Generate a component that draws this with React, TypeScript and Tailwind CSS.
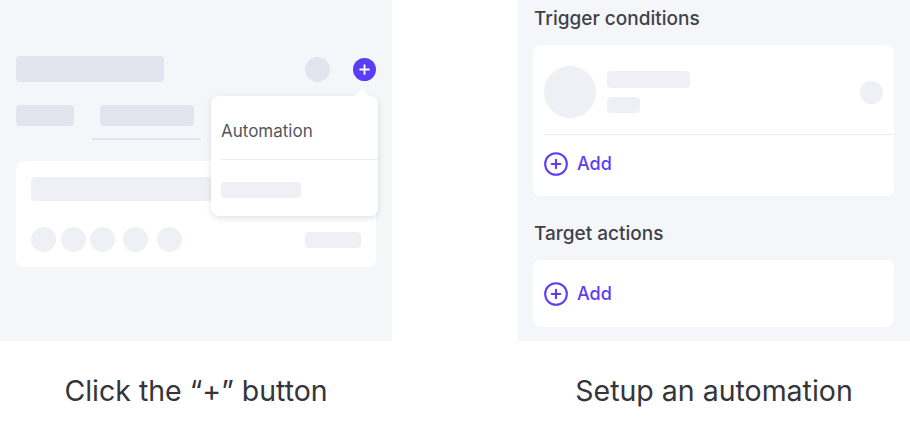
import React from 'react';
import { CirclePlus, Plus } from 'lucide-react';

const font = { fontFamily: 'Inter, "Noto Sans", sans-serif' };

function LeftPanel() {
  return (
    <div className="relative h-[341px] bg-[#f5f6fa] px-4 pt-[55px]">
      {/* header row */}
      <div className="flex h-[28px] items-center">
        <div className="h-[26px] w-[148px] rounded-[4px] bg-[#e3e5ee]" />
        <div className="ml-auto h-[25px] w-[25px] rounded-full bg-[#e3e5ee]" />
        <div className="ml-[23px] flex h-[23px] w-[23px] items-center justify-center rounded-full bg-[#5b3df5]">
          <Plus className="h-[15px] w-[15px] text-white" strokeWidth={3} />
        </div>
      </div>

      {/* tabs */}
      <div className="mt-[22px] flex items-start">
        <div className="h-[21px] w-[58px] rounded-[4px] bg-[#e3e5ee]" />
        <div className="ml-[18px] flex w-[109px] flex-col items-center">
          <div className="h-[21px] w-[94px] rounded-[4px] bg-[#e3e5ee]" />
          <div className="mt-3 h-[2px] w-full bg-[#e3e5ee]" />
        </div>
      </div>

      {/* card */}
      <div className="mt-[21px] h-[106px] w-[360px] rounded-lg bg-white px-[15px] pt-4">
        <div className="h-[24px] w-[260px] rounded-[4px] bg-[#eff0f5]" />
        <div className="mt-[26px] flex items-center">
          <div className="h-[25px] w-[25px] rounded-full bg-[#eff0f5]" />
          <div className="ml-[5px] h-[25px] w-[25px] rounded-full bg-[#eff0f5]" />
          <div className="ml-[4px] h-[25px] w-[25px] rounded-full bg-[#eff0f5]" />
          <div className="ml-[8px] h-[25px] w-[25px] rounded-full bg-[#eff0f5]" />
          <div className="ml-[9px] h-[25px] w-[25px] rounded-full bg-[#eff0f5]" />
          <div className="ml-auto h-[16px] w-[56px] rounded-[4px] bg-[#eff0f5]" />
        </div>
      </div>

      {/* popup menu */}
      <div className="absolute left-[211px] top-[96px] w-[167px] rounded-lg bg-white shadow-[0_2px_6px_rgba(0,0,0,0.12)]">
        <div className="absolute -top-[5px] right-[11px] h-[10px] w-[10px] rotate-45 rounded-[1px] bg-white" />
        <div className="relative pl-[10px]">
          <div className="flex h-[63px] items-center pt-[8px] text-[17px] text-[#53575e]" style={font}>
            Automation
          </div>
          <div className="h-px bg-[#ebecf0]" />
          <div className="pb-[18px] pt-[22px]">
            <div className="h-[16px] w-[80px] rounded-[4px] bg-[#eff0f5]" />
          </div>
        </div>
      </div>
    </div>
  );
}

function AddRow() {
  return (
    <div className="flex items-center gap-[8px] text-[18px] font-medium text-[#5b3df5]" style={font}>
      <CirclePlus className="h-[26px] w-[26px] -ml-[1px]" strokeWidth={1.9} />
      <span>Add</span>
    </div>
  );
}

function RightPanel() {
  return (
    <div className="h-[341px] bg-[#f5f6fa] pl-[15px] pr-4" style={font}>
      <div className="pl-[1px] pt-[5px] text-[19px] font-medium leading-[28px] text-[#3e4248]">Trigger conditions</div>
      <div className="mt-[12px] h-[151px] rounded-lg bg-white pl-[11px]">
        <div className="flex items-center pr-[11px] pt-[21px]">
          <div className="h-[52px] w-[52px] rounded-full bg-[#eff0f5]" />
          <div className="ml-[11px] flex flex-col gap-[9px]">
            <div className="h-[17px] w-[83px] rounded-[4px] bg-[#eff0f5]" />
            <div className="h-[16px] w-[33px] rounded-[4px] bg-[#eff0f5]" />
          </div>
          <div className="ml-auto h-[23px] w-[23px] rounded-full bg-[#eff0f5]" />
        </div>
        <div className="mt-[16px] h-px bg-[#ebecf2]" />
        <div className="pt-[15px]">
          <AddRow />
        </div>
      </div>
      <div className="mt-[24px] pl-[1px] text-[19px] font-medium leading-[28px] text-[#3e4248]">Target actions</div>
      <div className="mt-[12px] flex h-[67px] items-center rounded-lg bg-white pl-[11px]">
        <AddRow />
      </div>
    </div>
  );
}

export default function App() {
  return (
    <div className="h-[443px] w-[910px] bg-white" style={font}>
      <div className="flex justify-between">
        <div className="w-[392px]">
          <LeftPanel />
          <div className="flex h-[102px] items-center justify-center pb-[2px] text-[28.5px] text-[#34353b]">
            Click the “+” button
          </div>
        </div>
        <div className="w-[392px]">
          <RightPanel />
          <div className="flex h-[102px] items-center justify-center pb-[2px] text-[28.5px] text-[#34353b]">
            Setup an automation
          </div>
        </div>
      </div>
    </div>
  );
}
